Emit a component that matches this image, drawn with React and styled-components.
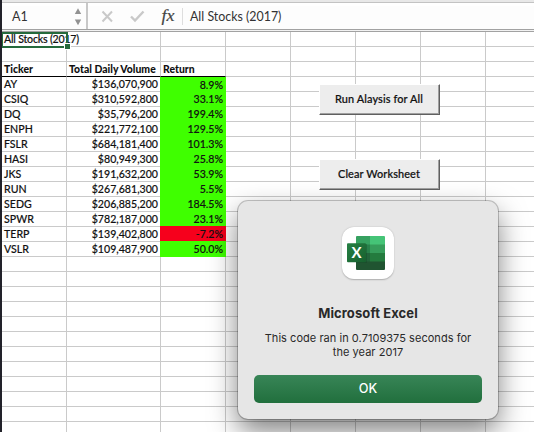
import React from "react";
import styled, { createGlobalStyle } from "styled-components";

const GlobalStyle = createGlobalStyle`
  html, body { margin: 0; padding: 0; overflow: hidden; }
  *, *::before, *::after { box-sizing: border-box; }
`;

const Window = styled.div`
  position: relative;
  width: 534px;
  height: 432px;
  overflow: hidden;
  background: #fff;
  border-left: 2px solid #22222a;
  font-family: Lato, "Liberation Sans", sans-serif;
  color: #111;
`;

const FormulaBar = styled.header`
  display: flex;
  height: 32px;
  padding-top: 3px;
  background: linear-gradient(#e8e8e8 0 2px, #c3c3c3 2px 3px, #fff 3px 6px, #fdfdfd 6px 29px, #a2a2a2 29px 30px, #f2f2f2 30px 31px, #a2a2a2 31px);
`;

const NameBox = styled.div`
  display: flex;
  align-items: center;
  justify-content: space-between;
  width: 86px;
  height: 26px;
  padding: 0 4px 0 10px;
  border-right: 2px solid #c8c8c8;
  font-size: 12.5px;
  color: #333;
`;

const BarIcons = styled.div`
  display: flex;
  align-items: center;
  width: 94px;
  height: 26px;
`;

const FormulaText = styled.div`
  height: 17px;
  margin-top: 5px;
  padding-left: 7px;
  border-left: 1px solid #dedede;
  font-size: 12.4px;
  line-height: 18px;
  color: #333;
  white-space: nowrap;
`;

const Grid = styled.div`
  display: grid;
  grid-template-columns: 65px 94px repeat(6, 65px);
  grid-auto-rows: 15px;
  width: 549px;
`;

const Cell = styled.div`
  position: relative;
  padding: 0 2px;
  border-right: 1px solid #cacaca;
  border-bottom: 1px solid ${(p) => (p.$rule ? "#000" : "#cacaca")};
  font-size: ${(p) => (p.$bold ? "10.4px" : "10.6px")};
  font-weight: ${(p) => (p.$bold ? 900 : 500)};
  line-height: 15px;
  letter-spacing: ${(p) => p.$track || "0"};
  text-align: ${(p) => (p.$right ? "right" : "left")};
  white-space: nowrap;
  -webkit-text-stroke: ${(p) => (p.$bold ? "0" : "0.15px #111")};
`;

const ReturnCell = styled(Cell)`
  margin: -1px 0 ${(p) => (p.$last ? "0" : "1px")} -1px;
  padding-top: 1px;
  border: 0;
  padding-right: 3px;
  background: ${(p) => (p.$loss ? "#f6001c" : "#3fff00")};
  margin-top: ${(p) => (p.$first ? "0" : "-1px")};
`;

const Selection = styled.div`
  position: absolute;
  left: -1px;
  top: 0;
  width: 67px;
  height: 16px;
  border: 2px solid #256a3c;
  z-index: 1;

  &::after {
    content: "";
    position: absolute;
    right: -5px;
    bottom: -4px;
    width: 7px;
    height: 7px;
    border: 1px solid #fff;
    background: #256a3c;
  }
`;

const SheetButton = styled.button`
  position: absolute;
  left: 317px;
  top: ${(p) => p.$top}px;
  width: 121px;
  height: 31px;
  padding: 0 1px 2px 0;
  border: 1px solid #fff;
  border-right: 1px solid #606060;
  border-bottom: 1px solid #606060;
  box-shadow: inset -1px -1px #a0a0a0;
  background: #ededed;
  color: #111;
  font: 500 10.9px Lato, "Liberation Sans", sans-serif;
  letter-spacing: 0.12px;
  -webkit-text-stroke: 0.2px #111;
`;

const Dialog = styled.section`
  position: absolute;
  left: 236px;
  top: 201px;
  display: flex;
  flex-direction: column;
  align-items: center;
  width: 260px;
  height: 218px;
  padding: 26px 16px 16px;
  border-radius: 10px;
  background: #e6e6e6;
  box-shadow: 0 0 0 1px rgba(0, 0, 0, 0.22), 0 12px 28px rgba(0, 0, 0, 0.5);
  font-family: Inter, "Liberation Sans", sans-serif;
  color: #292929;
  z-index: 2;
`;

const AppIcon = styled.div`
  width: 52px;
  height: 52px;
  border-radius: 12px;
  background: #fff;
  box-shadow: 0 0.5px 1.5px rgba(0, 0, 0, 0.25);
`;

const Title = styled.h1`
  margin: 26px 0 0;
  font-size: 13px;
  font-weight: 700;
  line-height: 16px;
  letter-spacing: 0.1px;
`;

const Message = styled.p`
  margin: 10px 0 0;
  font-size: 11px;
  line-height: 14px;
  letter-spacing: 0.04px;
  text-align: center;
  white-space: nowrap;
`;

const OkButton = styled.button`
  width: 228px;
  height: 28px;
  margin-top: auto;
  padding: 0 0 2px;
  border: 0;
  border-radius: 5px;
  background: linear-gradient(#388557, #216f3d);
  color: #fff;
  font: 500 12.7px Inter, "Liberation Sans", sans-serif;
`;

const stocks = [
  ["AY", "$136,070,900", "8.9%"],
  ["CSIQ", "$310,592,800", "33.1%"],
  ["DQ", "$35,796,200", "199.4%"],
  ["ENPH", "$221,772,100", "129.5%"],
  ["FSLR", "$684,181,400", "101.3%"],
  ["HASI", "$80,949,300", "25.8%"],
  ["JKS", "$191,632,200", "53.9%"],
  ["RUN", "$267,681,300", "5.5%"],
  ["SEDG", "$206,885,200", "184.5%"],
  ["SPWR", "$782,187,000", "23.1%"],
  ["TERP", "$139,402,800", "-7.2%"],
  ["VSLR", "$109,487,900", "50.0%"],
];

const Blanks = ({ count }) => Array.from({ length: count }, (_, i) => <Cell key={i} />);

const Stepper = () => (
  <svg width="8" height="20" viewBox="0 0 8 20" fill="#929292">
    <path d="M4 2.3 7.2 8H.8zM4 19.2 7.2 13.5H.8z" />
  </svg>
);

const BarGlyphs = () => (
  <svg width="94" height="26" viewBox="0 0 94 26" fill="none">
    <path d="m14.5 8.5 9.5 10M24 8.5l-9.5 10" stroke="#c9c9c9" strokeWidth="2" />
    <path d="m43 13.5 4 4 8.5-9" stroke="#c9c9c9" strokeWidth="2.4" />
    <text x="73.5" y="18" fill="#444" fontFamily="Liberation Serif, serif" fontStyle="italic" fontSize="17.5" textLength="13" lengthAdjust="spacingAndGlyphs" stroke="#444" strokeWidth="0.2">fx</text>
  </svg>
);

const ExcelLogo = () => (
  <svg width="52" height="52" viewBox="0 0 52 52">
    <defs>
      <linearGradient id="badge" x1="0" y1="0" x2="1" y2="1">
        <stop offset="0" stopColor="#268044" />
        <stop offset="1" stopColor="#17602e" />
      </linearGradient>
      <clipPath id="book"><rect x="14" y="9" width="29" height="34" rx="1" /></clipPath>
    </defs>
    <g clipPath="url(#book)">
      <path fill="#36a160" d="M14 9h15v9H14z" />
      <path fill="#45c477" d="M28 9h15v9H28z" />
      <path fill="#28814a" d="M14 17.5h14v9H14z" />
      <path fill="#369d5b" d="M28 17.5h15v9H28z" />
      <path fill="#22653b" d="M14 26h14v9H14z" />
      <path fill="#247b3e" d="M28 26h15v9H28z" />
      <path fill="#205431" d="M14 34.5h29V43H14z" />
      <path fill="#123d22" opacity=".3" d="M14 17h11v19H14z" />
    </g>
    <rect x="5" y="16.3" width="19" height="19" rx="1" fill="url(#badge)" />
    <text x="14.5" y="31.1" textAnchor="middle" fill="#fff" fontFamily="Lato, sans-serif" fontWeight="700" fontSize="15">X</text>
  </svg>
);

export default function App() {
  return (
    <>
      <GlobalStyle />
      <Window>
        <FormulaBar>
          <NameBox>A1<Stepper /></NameBox>
          <BarIcons><BarGlyphs /></BarIcons>
          <FormulaText>All Stocks (2017)</FormulaText>
        </FormulaBar>
        <Grid>
          <Cell $track="-0.2px">All Stocks (2017)<Selection /></Cell>
          <Blanks count={7} />
          <Blanks count={8} />
          <Cell $bold $rule $track="0.02px">Ticker</Cell>
          <Cell $bold $rule $track="0.02px">Total Daily Volume</Cell>
          <Cell $bold $rule $track="0.02px">Return</Cell>
          <Blanks count={5} />
          {stocks.map(([ticker, volume, change], i) => (
            <React.Fragment key={ticker}>
              <Cell>{ticker}</Cell>
              <Cell $right>{volume}</Cell>
              <ReturnCell $right $first={i === 0} $last={i === stocks.length - 1} $loss={change.startsWith("-")}>{change}</ReturnCell>
              <Blanks count={5} />
            </React.Fragment>
          ))}
          <Blanks count={96} />
        </Grid>
        <SheetButton $top={84}>Run Alaysis for All</SheetButton>
        <SheetButton $top={159}>Clear Worksheet</SheetButton>
        <Dialog>
          <AppIcon><ExcelLogo /></AppIcon>
          <Title>Microsoft Excel</Title>
          <Message>This code ran in 0.7109375 seconds for<br />the year 2017</Message>
          <OkButton>OK</OkButton>
        </Dialog>
      </Window>
    </>
  );
}
